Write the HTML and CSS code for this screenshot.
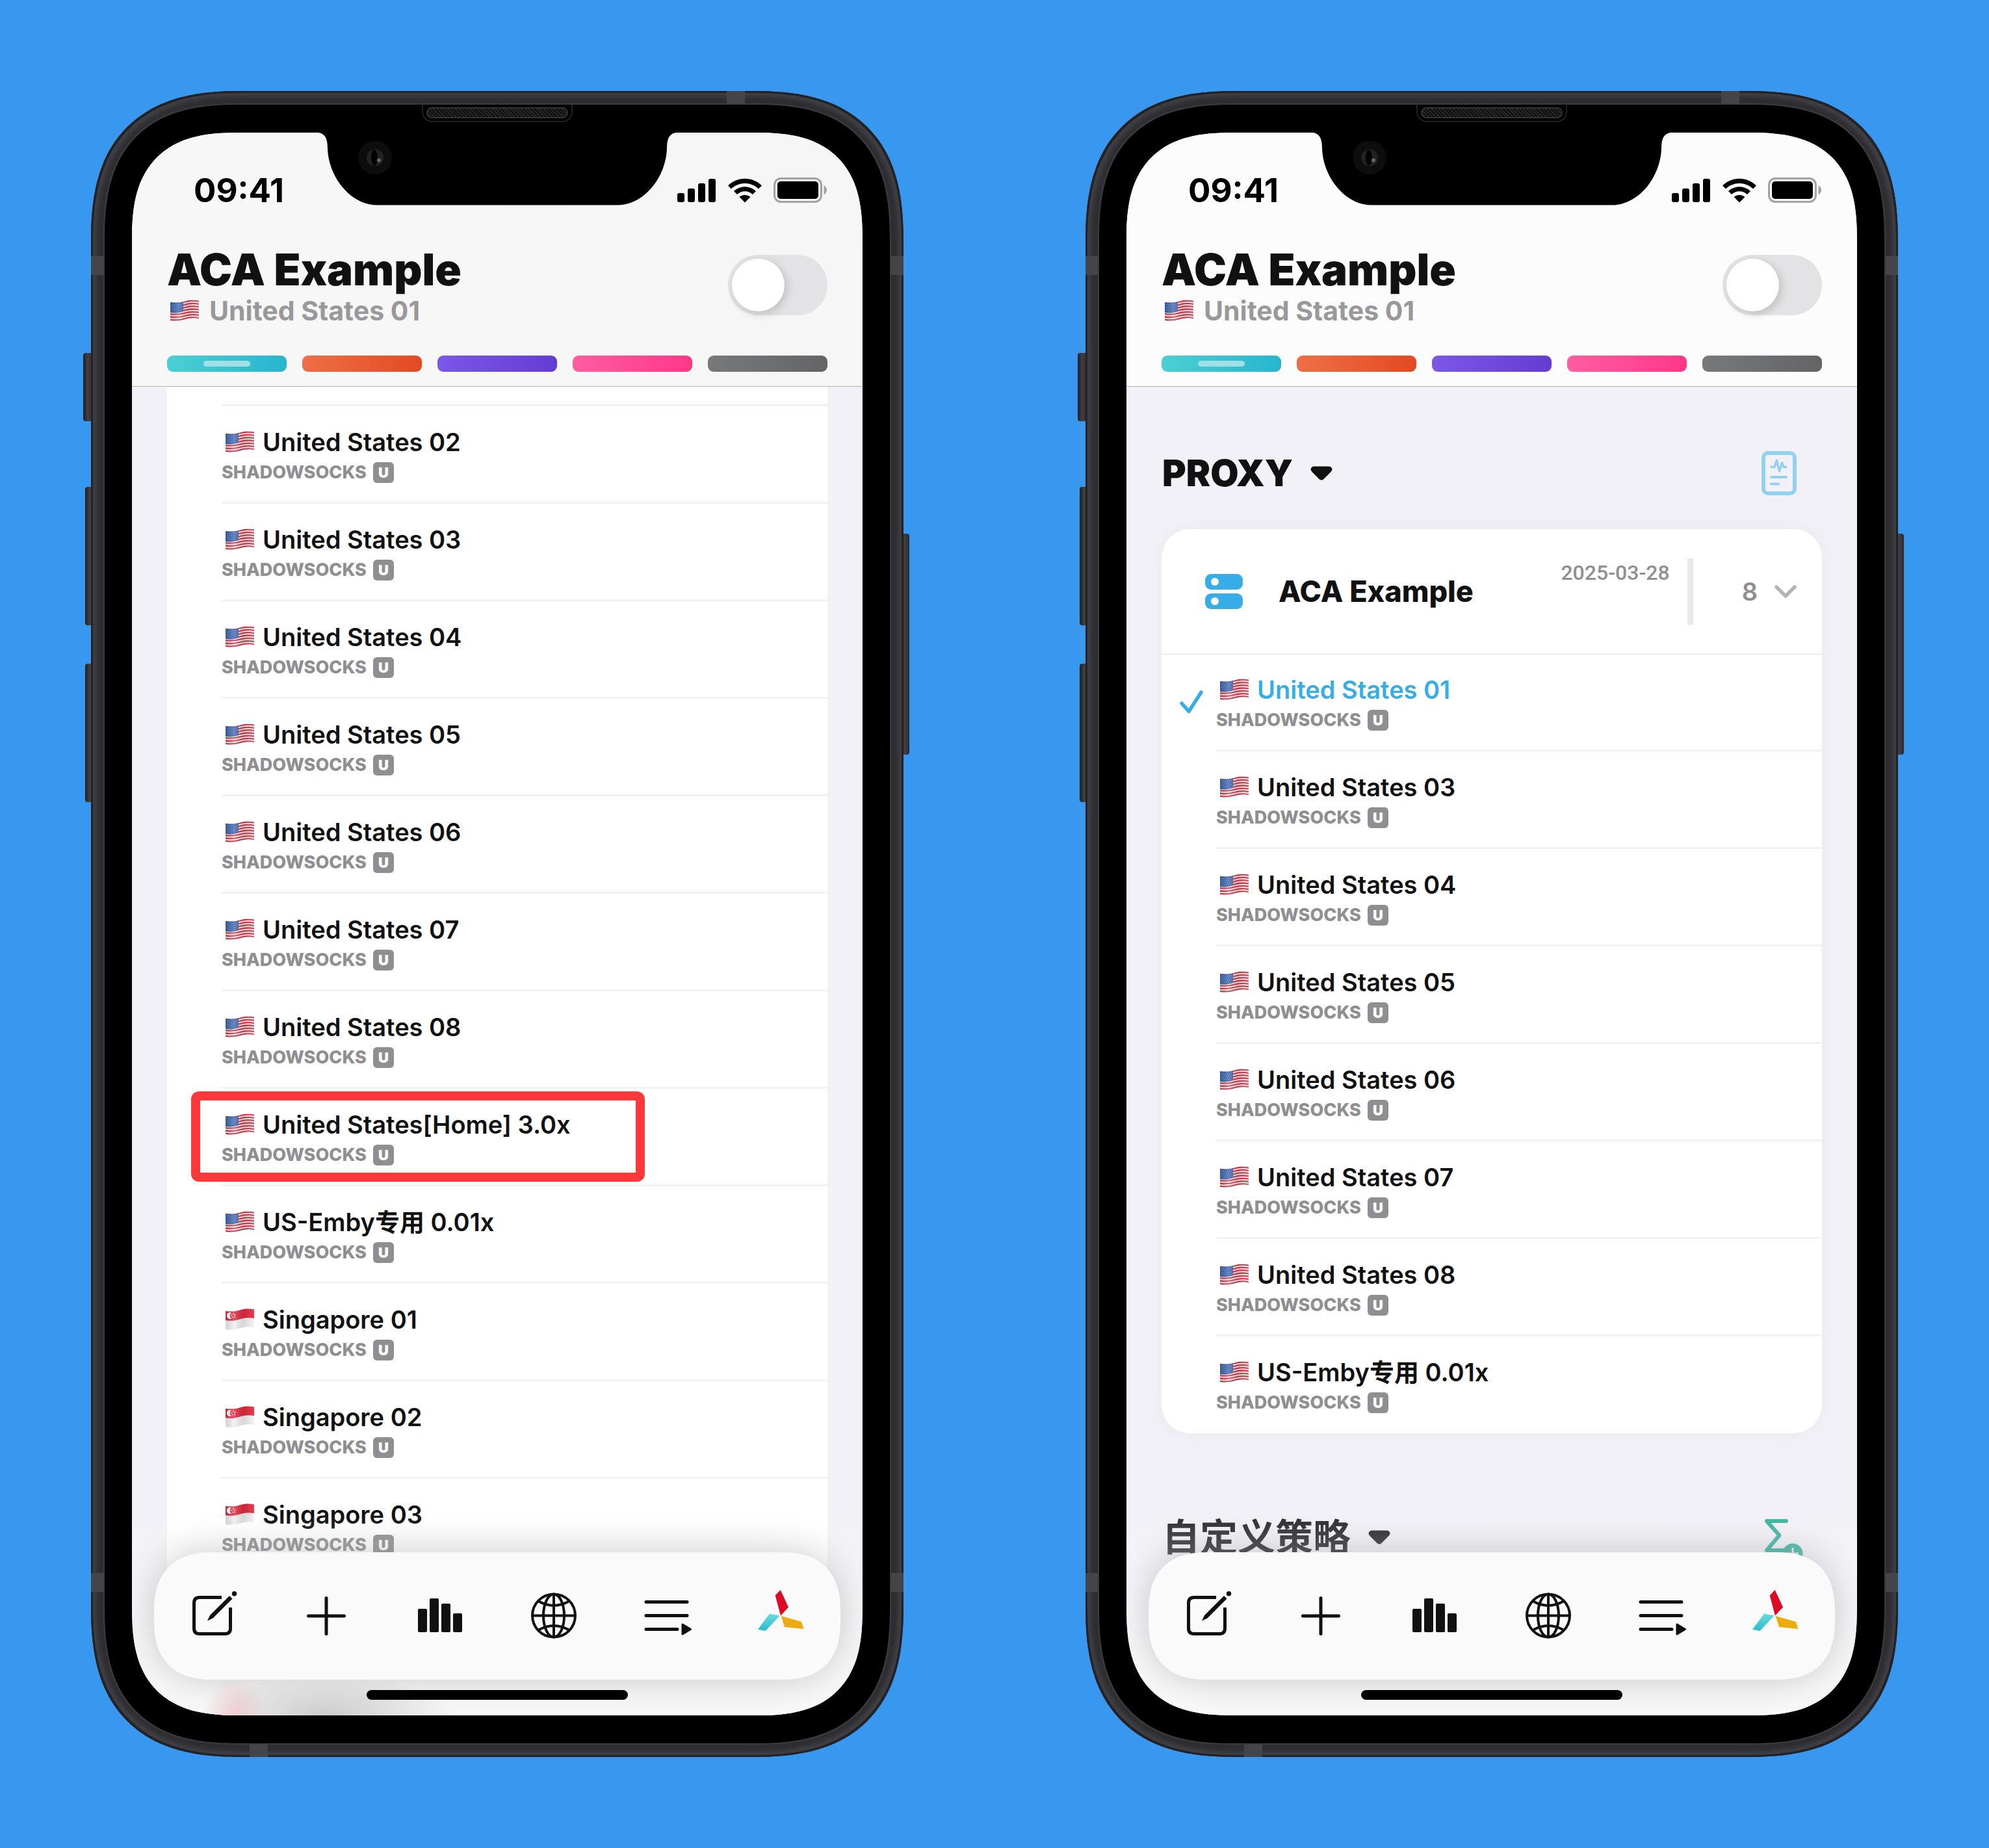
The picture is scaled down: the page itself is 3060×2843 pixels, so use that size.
FILE: index.html
```html
<!DOCTYPE html>
<html lang="zh-CN">
<head>
<meta charset="utf-8">
<meta name="viewport" content="width=device-width, initial-scale=1">
<title>ACA Example</title>
<link rel="stylesheet" href="styles.css">
</head>
<body>
<svg class="sprite" aria-hidden="true">
  <defs>
    <linearGradient id="wave" x1="0" x2="1" y1="0" y2="0">
      <stop offset="0" stop-color="#000" stop-opacity=".12"/>
      <stop offset=".3" stop-color="#fff" stop-opacity=".18"/>
      <stop offset=".65" stop-color="#000" stop-opacity=".1"/>
      <stop offset="1" stop-color="#fff" stop-opacity=".1"/>
    </linearGradient>
    <linearGradient id="cyan" x1="0" x2="0" y1="0" y2="1">
      <stop offset="0" stop-color="#6cdcdc"/><stop offset="1" stop-color="#2bbacb"/>
    </linearGradient>
    <clipPath id="cloth"><path d="M0 4C8 5 14 5 22 2.500C30 0 36 0 44 1.500V29C36 27.500 30 28 22 30.500C14 33 8 33.500 0 32Z"/></clipPath>
    <symbol id="flag-us" viewBox="0 0 44 34">
      <g clip-path="url(#cloth)">
        <rect width="44" height="34" fill="#f7f1f2"/>
        <g fill="none" stroke="#d33a4c" stroke-width="2.300">
          <path d="M0 5C8 6 14 6 22 3.500C30 1 36 1 44 2.500"/>
          <path d="M0 9.300C8 10.300 14 10.300 22 7.800C30 5.300 36 5.300 44 6.800"/>
          <path d="M0 13.600C8 14.600 14 14.600 22 12.100C30 9.600 36 9.600 44 11.100"/>
          <path d="M0 17.900C8 18.900 14 18.900 22 16.400C30 13.900 36 13.900 44 15.400"/>
          <path d="M0 22.200C8 23.200 14 23.200 22 20.700C30 18.200 36 18.200 44 19.700"/>
          <path d="M0 26.500C8 27.500 14 27.500 22 25C30 22.500 36 22.500 44 24"/>
          <path d="M0 30.900C8 31.900 14 31.900 22 29.400C30 26.900 36 26.900 44 28.400"/>
        </g>
        <path d="M0 3C8 5 13 5 20 2.500V18C13 20.500 8 21 0 20Z" fill="#3a63ad"/>
        <g fill="none" stroke="#b9c8e6" stroke-width="1" stroke-dasharray="1 2">
          <path d="M2 7.500Q10 9 19 6.500M3 10.500Q11 12 19 9.500M2 13.500Q10 15 19 12.500M3 16.500Q11 18 19 15.500"/>
        </g>
        <rect width="44" height="34" fill="url(#wave)"/>
      </g>
    </symbol>
    <symbol id="flag-sg" viewBox="0 0 44 34">
      <g clip-path="url(#cloth)">
        <rect width="44" height="34" fill="#f1f1f1"/>
        <path d="M0 0H44V15C36 13.500 30 14 22 16.500C14 19 8 19.500 0 18Z" fill="#e2293f"/>
        <path d="M9 6.500A5 5 0 1 0 9 15.500A5.500 5.500 0 0 1 9 6.500Z" fill="#fff"/>
        <g fill="#fff"><circle cx="12" cy="8" r="1"/><circle cx="9.500" cy="10.500" r="1"/><circle cx="14.500" cy="10" r="1"/><circle cx="10.500" cy="13.500" r="1"/><circle cx="13.800" cy="13.200" r="1"/></g>
        <rect width="44" height="34" fill="url(#wave)"/>
      </g>
    </symbol>
    <symbol id="signal" viewBox="0 0 60 38">
      <rect x="0" y="23" width="11" height="14" rx="3"/><rect x="16" y="16" width="11" height="21" rx="3"/>
      <rect x="32" y="8" width="11" height="29" rx="3"/><rect x="48" y="1" width="11" height="36" rx="3"/>
    </symbol>
    <symbol id="wifi" viewBox="0 0 54 38">
      <path d="M1 11.500C16-3 38-3 53 11.500L48 16.500C36 5 18 5 6 16.500Z"/>
      <path d="M10 20C20 11 34 11 44 20L39 25C32 18.500 22 18.500 15 25Z"/>
      <path d="M18.500 29C23.500 25 30.500 25 35.500 29L27 37.500Z"/>
    </symbol>
    <symbol id="battery" viewBox="0 0 83 40">
      <rect x="1.500" y="1.500" width="72" height="36" rx="10" fill="none" stroke="#a3a3a5" stroke-width="3"/>
      <rect x="6" y="6" width="63" height="27" rx="5"/>
      <path d="M77.500 12.500C83.500 15 83.500 24 77.500 26.500Z" fill="#a3a3a5"/>
    </symbol>
    <symbol id="edit" viewBox="0 0 76 76">
      <path d="M52 9.500H18Q9.500 9.500 9.500 18V57Q9.500 65.500 18 65.500H57Q65.500 65.500 65.500 57V25" fill="none" stroke="currentColor" stroke-width="5"/>
      <path d="M30 45.500L34 37L64 7L68.500 11.500L38.500 41.500Z"/>
      <circle cx="71.500" cy="3.800" r="3.700"/>
    </symbol>
    <symbol id="plus" viewBox="0 0 76 76"><path d="M10.500 38H65.500M38 10.500V65.500" stroke="currentColor" stroke-width="5" stroke-linecap="round"/></symbol>
    <symbol id="chart" viewBox="0 0 76 76">
      <rect x="4" y="27" width="14" height="36" rx="2"/><rect x="22" y="11" width="14" height="52" rx="2"/>
      <rect x="40" y="19" width="14" height="44" rx="2"/><rect x="58" y="34" width="14" height="29" rx="2"/>
    </symbol>
    <symbol id="globe" viewBox="0 0 76 76">
      <g fill="none" stroke="currentColor" stroke-width="4">
        <circle cx="38" cy="37.500" r="33"/><ellipse cx="38" cy="37.500" rx="16" ry="33"/>
        <path d="M38 4V71M5 37.500H71M14 15Q38 29 62 15M14 60Q38 46 62 60"/>
      </g>
    </symbol>
    <symbol id="lines" viewBox="0 0 76 76">
      <path d="M5 16.500H68M5 37.500H68M5 58.500H53" stroke="currentColor" stroke-width="5" stroke-linecap="round"/>
      <path d="M61 51L73.500 58.500L61 66Z" stroke="currentColor" stroke-width="3" stroke-linejoin="round"/>
    </symbol>
    <symbol id="vane" viewBox="0 0 76 76">
      <path d="M36.700 -2L28.700 6.500L37 37.500L49 24.500Z" fill="#dd0a25"/>
      <path d="M20 34.500L35.700 37.500L13.500 61L2 58.700Z" fill="url(#cyan)"/>
      <path d="M37.700 38L69 47L72.300 58L43 55Z" fill="#eeab0f"/>
    </symbol>
    <symbol id="caret" viewBox="0 0 34 22"><path d="M5 .5H29Q33 1 33.500 5Q33.500 7 31 9.500L20.500 20Q17 23 13.500 20L3 9.500Q.5 7 .5 5Q1 1 5 .5Z"/></symbol>
    <symbol id="report" viewBox="0 0 54 68">
      <g fill="none" stroke="currentColor" stroke-linecap="round" stroke-linejoin="round">
        <rect x="3" y="3" width="48" height="62" rx="7" stroke-width="6"/>
        <path d="M15 24.500H20L23.500 14L27.500 31L31.500 18L34 24.500H38" stroke-width="3.500"/>
        <path d="M15 40H38M15 50.500H26" stroke-width="4"/>
      </g>
    </symbol>
    <symbol id="sigma" viewBox="0 0 54 68">
      <path d="M38 9H8L27.500 31L8 54H38" fill="none" stroke="currentColor" stroke-width="6" stroke-linecap="round" stroke-linejoin="round"/>
      <circle cx="48" cy="59" r="15.500"/><path d="M48 50V68M39 59H57" stroke="#e6eceb" stroke-width="3"/>
    </symbol>
    <symbol id="server" viewBox="0 0 58 54">
      <rect y="0" width="58" height="24" rx="9"/><rect y="30" width="58" height="24" rx="9"/>
      <circle cx="15" cy="12" r="6" fill="#fff"/><circle cx="15" cy="42" r="6" fill="#fff"/>
    </symbol>
    <symbol id="chevron" viewBox="0 0 36 22"><path d="M4 4L18 18L32 4" fill="none" stroke="currentColor" stroke-width="5.500" stroke-linecap="round" stroke-linejoin="round"/></symbol>
    <symbol id="check" viewBox="0 0 36 36"><path d="M3 20L14 32.500L33 3" fill="none" stroke="currentColor" stroke-width="5.500" stroke-linecap="round" stroke-linejoin="round"/></symbol>
  </defs>
</svg>

<main class="stage">
  <section class="phone" aria-label="Phone 1">
    <i class="key key-mute"></i><i class="key key-up"></i><i class="key key-down"></i><i class="key key-power"></i>
    <div class="frame">
      <i class="band band-top"></i><i class="band band-bottom"></i><i class="band band-side-top"></i><i class="band band-side-bottom"></i>
      <div class="bezel">
        <i class="speaker"></i>
        <div class="screen">
          <header class="header">
            <div class="status"><span class="time">09:41</span>
              <svg class="i-signal"><use href="#signal"/></svg><svg class="i-wifi"><use href="#wifi"/></svg><svg class="i-battery"><use href="#battery"/></svg>
            </div>
            <div class="headline">
              <div><h1 class="title">ACA Example</h1>
                <p class="current"><svg class="flag" role="img" aria-label="US"><use href="#flag-us"/></svg>United States 01</p></div>
              <input class="switch" type="checkbox" role="switch" aria-label="ACA Example">
            </div>
            <div class="pages">
              <button class="page cyan active" aria-label="1"></button><button class="page orange" aria-label="2"></button><button class="page purple" aria-label="3"></button><button class="page pink" aria-label="4"></button><button class="page grey" aria-label="5"></button>
            </div>
          </header>
          <div class="content">
            <ul class="nodes scrolled">
              <li class="node"><span class="name"><svg class="flag"><use href="#flag-us"/></svg>United States 02</span><span class="proto">SHADOWSOCKS<b class="udp">U</b></span></li>
              <li class="node"><span class="name"><svg class="flag"><use href="#flag-us"/></svg>United States 03</span><span class="proto">SHADOWSOCKS<b class="udp">U</b></span></li>
              <li class="node"><span class="name"><svg class="flag"><use href="#flag-us"/></svg>United States 04</span><span class="proto">SHADOWSOCKS<b class="udp">U</b></span></li>
              <li class="node"><span class="name"><svg class="flag"><use href="#flag-us"/></svg>United States 05</span><span class="proto">SHADOWSOCKS<b class="udp">U</b></span></li>
              <li class="node"><span class="name"><svg class="flag"><use href="#flag-us"/></svg>United States 06</span><span class="proto">SHADOWSOCKS<b class="udp">U</b></span></li>
              <li class="node"><span class="name"><svg class="flag"><use href="#flag-us"/></svg>United States 07</span><span class="proto">SHADOWSOCKS<b class="udp">U</b></span></li>
              <li class="node"><span class="name"><svg class="flag"><use href="#flag-us"/></svg>United States 08</span><span class="proto">SHADOWSOCKS<b class="udp">U</b></span></li>
              <li class="node marked"><span class="name"><svg class="flag"><use href="#flag-us"/></svg>United States[Home] 3.0x</span><span class="proto">SHADOWSOCKS<b class="udp">U</b></span></li>
              <li class="node"><span class="name"><svg class="flag"><use href="#flag-us"/></svg>US-Emby专用 0.01x</span><span class="proto">SHADOWSOCKS<b class="udp">U</b></span></li>
              <li class="node"><span class="name"><svg class="flag"><use href="#flag-sg"/></svg>Singapore 01</span><span class="proto">SHADOWSOCKS<b class="udp">U</b></span></li>
              <li class="node"><span class="name"><svg class="flag"><use href="#flag-sg"/></svg>Singapore 02</span><span class="proto">SHADOWSOCKS<b class="udp">U</b></span></li>
              <li class="node"><span class="name"><svg class="flag"><use href="#flag-sg"/></svg>Singapore 03</span><span class="proto">SHADOWSOCKS<b class="udp">U</b></span></li>
            </ul>
          </div>
          <div class="haze haze-row"></div>
          <nav class="tabs">
            <button class="tab" aria-label="Edit"><svg><use href="#edit"/></svg></button>
            <button class="tab" aria-label="Add"><svg><use href="#plus"/></svg></button>
            <button class="tab" aria-label="Statistics"><svg><use href="#chart"/></svg></button>
            <button class="tab" aria-label="Network"><svg><use href="#globe"/></svg></button>
            <button class="tab" aria-label="Rules"><svg><use href="#lines"/></svg></button>
            <button class="tab" aria-label="Home"><svg><use href="#vane"/></svg></button>
          </nav>
          <i class="home-bar"></i>
          <svg class="notch" viewBox="0 0 562 112"><path d="M0 0C16 0 20 8 20 26C22 70 56 112 96 112H466C506 112 540 70 542 26C542 8 546 0 562 0Z"/><circle cx="93" cy="39" r="26" fill="#0d0d0d"/><circle cx="93" cy="39" r="13" fill="#222225"/><ellipse cx="92" cy="39" rx="5" ry="12"/><circle cx="99" cy="43" r="3" fill="#66666b"/></svg>
        </div>
      </div>
    </div>
  </section>

  <section class="phone" aria-label="Phone 2">
    <i class="key key-mute"></i><i class="key key-up"></i><i class="key key-down"></i><i class="key key-power"></i>
    <div class="frame">
      <i class="band band-top"></i><i class="band band-bottom"></i><i class="band band-side-top"></i><i class="band band-side-bottom"></i>
      <div class="bezel">
        <i class="speaker"></i>
        <div class="screen">
          <header class="header light">
            <div class="status"><span class="time">09:41</span>
              <svg class="i-signal"><use href="#signal"/></svg><svg class="i-wifi"><use href="#wifi"/></svg><svg class="i-battery"><use href="#battery"/></svg>
            </div>
            <div class="headline">
              <div><h1 class="title">ACA Example</h1>
                <p class="current"><svg class="flag" role="img" aria-label="US"><use href="#flag-us"/></svg>United States 01</p></div>
              <input class="switch" type="checkbox" role="switch" aria-label="ACA Example">
            </div>
            <div class="pages">
              <button class="page cyan active" aria-label="1"></button><button class="page orange" aria-label="2"></button><button class="page purple" aria-label="3"></button><button class="page pink" aria-label="4"></button><button class="page grey" aria-label="5"></button>
            </div>
          </header>
          <div class="content">
            <div class="section-head">
              <h2><button class="fold">PROXY<svg class="i-caret"><use href="#caret"/></svg></button></h2>
              <button class="tool report" aria-label="Test"><svg><use href="#report"/></svg></button>
            </div>
            <div class="card">
              <div class="card-head">
                <svg class="i-server"><use href="#server"/></svg>
                <h3 class="card-title">ACA Example</h3>
                <div class="expiry"><time datetime="2025-03-28">2025-03-28</time></div>
                <button class="count">8<svg class="i-chevron"><use href="#chevron"/></svg></button>
              </div>
              <ul class="nodes">
                <li class="node selected"><svg class="i-check"><use href="#check"/></svg><span class="name"><svg class="flag"><use href="#flag-us"/></svg>United States 01</span><span class="proto">SHADOWSOCKS<b class="udp">U</b></span></li>
                <li class="node"><span class="name"><svg class="flag"><use href="#flag-us"/></svg>United States 03</span><span class="proto">SHADOWSOCKS<b class="udp">U</b></span></li>
                <li class="node"><span class="name"><svg class="flag"><use href="#flag-us"/></svg>United States 04</span><span class="proto">SHADOWSOCKS<b class="udp">U</b></span></li>
                <li class="node"><span class="name"><svg class="flag"><use href="#flag-us"/></svg>United States 05</span><span class="proto">SHADOWSOCKS<b class="udp">U</b></span></li>
                <li class="node"><span class="name"><svg class="flag"><use href="#flag-us"/></svg>United States 06</span><span class="proto">SHADOWSOCKS<b class="udp">U</b></span></li>
                <li class="node"><span class="name"><svg class="flag"><use href="#flag-us"/></svg>United States 07</span><span class="proto">SHADOWSOCKS<b class="udp">U</b></span></li>
                <li class="node"><span class="name"><svg class="flag"><use href="#flag-us"/></svg>United States 08</span><span class="proto">SHADOWSOCKS<b class="udp">U</b></span></li>
                <li class="node"><span class="name"><svg class="flag"><use href="#flag-us"/></svg>US-Emby专用 0.01x</span><span class="proto">SHADOWSOCKS<b class="udp">U</b></span></li>
              </ul>
            </div>
            <div class="section-head next">
              <h2><button class="fold">自定义策略<svg class="i-caret"><use href="#caret"/></svg></button></h2>
              <button class="tool sigma" aria-label="Add policy"><svg><use href="#sigma"/></svg></button>
            </div>
          </div>
          <div class="haze"></div>
          <nav class="tabs">
            <button class="tab" aria-label="Edit"><svg><use href="#edit"/></svg></button>
            <button class="tab" aria-label="Add"><svg><use href="#plus"/></svg></button>
            <button class="tab" aria-label="Statistics"><svg><use href="#chart"/></svg></button>
            <button class="tab" aria-label="Network"><svg><use href="#globe"/></svg></button>
            <button class="tab" aria-label="Rules"><svg><use href="#lines"/></svg></button>
            <button class="tab" aria-label="Home"><svg><use href="#vane"/></svg></button>
          </nav>
          <i class="home-bar"></i>
          <svg class="notch" viewBox="0 0 562 112"><path d="M0 0C16 0 20 8 20 26C22 70 56 112 96 112H466C506 112 540 70 542 26C542 8 546 0 562 0Z"/><circle cx="93" cy="39" r="26" fill="#0d0d0d"/><circle cx="93" cy="39" r="13" fill="#222225"/><ellipse cx="92" cy="39" rx="5" ry="12"/><circle cx="99" cy="43" r="3" fill="#66666b"/></svg>
        </div>
      </div>
    </div>
  </section>
</main>
</body>
</html>
```
FILE: styles.css
```css
*, *::before, *::after { box-sizing: border-box; }

body {
  margin: 0;
  background: #3898ef;
  color: #111;
  font-family: Inter, "Noto Sans CJK SC", sans-serif;
}

h1, h2, h3, p, ul { margin: 0; padding: 0; }
ul { list-style: none; }
button { margin: 0; padding: 0; border: 0; background: none; color: inherit; font: inherit; }
svg { display: block; flex: none; fill: currentColor; overflow: visible; }
symbol { overflow: visible; }
.sprite { position: absolute; width: 0; height: 0; }

.stage { display: grid; grid-template-columns: 1fr 1fr; gap: 280px; padding: 140px; }

/* Device body */
.phone { position: relative; }
.frame {
  position: relative;
  padding: 21px;
  border-radius: 192px;
  background: #2e2d32;
  box-shadow: inset 0 0 0 3px #232226, inset 0 0 6px 8px #414045;
}
.bezel {
  position: relative;
  padding: 43px 42px;
  border-radius: 171px;
  background: #000;
  box-shadow: 0 0 0 2px #3b3a3e;
}
.screen {
  position: relative;
  display: flex;
  flex-direction: column;
  aspect-ratio: 1124 / 2435;
  overflow: hidden;
  border-radius: 132px;
  background: #f2f1f7;
}
@supports (corner-shape: round) {
  .frame { border-radius: 235px; corner-shape: superellipse(1.36); }
  .bezel { border-radius: 210px; corner-shape: superellipse(1.38); }
  .screen { border-radius: 168px; corner-shape: superellipse(1.42); }
  .tabs { corner-shape: superellipse(1.3); }
}

.key { position: absolute; width: 14px; border-radius: 4px; background: linear-gradient(90deg, #1f1e21, #434044 50%, #2a292c); }
.key-mute { left: -12px; top: 403px; height: 105px; }
.key-up { left: -9px; top: 609px; height: 213px; }
.key-down { left: -9px; top: 881px; height: 213px; }
.key-power { right: -9px; top: 681px; height: 340px; }

.band { position: absolute; background: #454448; }
.band-top { top: 0; right: 244px; width: 28px; height: 19px; }
.band-bottom { bottom: 0; left: 244px; width: 28px; height: 19px; }
.band-side-top, .band-side-bottom { left: 0; right: 0; height: 29px; }
.band-side-top { top: 254px; }
.band-side-bottom { bottom: 254px; }

.speaker {
  position: absolute;
  top: 0;
  left: 50%;
  width: 232px;
  height: 27px;
  margin-left: -116px;
  border: 2px solid #202022;
  border-top: 0;
  border-radius: 0 0 16px 16px;
}
.speaker::after {
  content: "";
  position: absolute;
  inset: 4px 5px;
  border: 2px solid #333336;
  border-radius: 9px;
  background: repeating-linear-gradient(45deg, #101011 0 2px, #262628 2px 4px);
}
.notch { position: absolute; top: -1px; left: 50%; width: 562px; height: 113px; margin-left: -281px; color: #000; }

/* Header */
.header { padding: 59px 54px 22px; border-bottom: 1px solid #b2b2b5; background: linear-gradient(90deg, #f8f7f8, #f6f6f6); }
.header.light { background: #fcfcfd; }
.status { display: flex; align-items: center; height: 60px; padding-left: 41px; color: #000; }
.time { flex: 1; font-size: 51px; font-weight: 700; line-height: 60px; }
.i-signal { width: 60px; height: 38px; margin-right: 17px; }
.i-wifi { width: 54px; height: 38px; margin-right: 17px; }
.i-battery { width: 83px; height: 40px; }
.headline { display: flex; align-items: center; justify-content: space-between; margin-top: 52px; }
.title { font-size: 67px; font-weight: 900; line-height: 80px; }
.current { display: flex; align-items: center; padding-left: 5px; color: #99999b; font-size: 41px; font-weight: 700; line-height: 46px; }
.flag { width: 44px; height: 34px; margin-right: 13px; }
.current .flag { margin-right: 16px; }

.switch {
  appearance: none;
  width: 153px;
  height: 93px;
  margin: 0;
  padding: 6px;
  border-radius: 47px;
  background: #e3e3e5;
}
.switch::before {
  content: "";
  display: block;
  width: 81px;
  height: 81px;
  border-radius: 50%;
  background: #fff;
  box-shadow: 4px 4px 14px rgb(0 0 0 / 16%);
}

.pages { display: grid; grid-template-columns: repeat(5, 1fr); gap: 24px; margin-top: 46px; }
.page { display: flex; align-items: center; justify-content: center; height: 25px; border-radius: 9px; }
.page.active::before { content: ""; width: 72px; height: 9px; border-radius: 5px; background: #9fe0e8; }
.cyan { background: linear-gradient(100deg, #4bd0d2, #27b5cf); }
.orange { background: linear-gradient(100deg, #ee6f47, #e24a22); }
.purple { background: linear-gradient(100deg, #7b58e6, #633dd2); }
.pink { background: linear-gradient(100deg, #ff5ea0, #ff3787); }
.grey { background: linear-gradient(100deg, #77797b, #646467); }

/* Lists */
.content { display: flex; flex: 1; flex-direction: column; min-height: 0; padding: 0 54px; }
.scrolled { flex: 1; padding-top: 27px; background: #fff; }
.node {
  position: relative;
  display: flex;
  flex-direction: column;
  gap: 8px;
  height: 150px;
  margin-left: 84px;
  padding-top: 32px;
  border-top: 3px solid #f3f3f4;
}
.name { display: flex; align-items: center; padding-left: 6px; font-size: 38px; font-weight: 600; line-height: 46px; }
.proto { display: flex; align-items: center; gap: 10px; color: #8f8f91; font-size: 27px; font-weight: 800; line-height: 32px; }
.udp { width: 32px; height: 32px; border-radius: 6px; background: #8f8f91; color: #fff; font-size: 22px; font-weight: 900; text-align: center; }
.marked { z-index: 1; }
.marked::after {
  content: "";
  position: absolute;
  top: 4px;
  left: -47px;
  width: 698px;
  height: 139px;
  border: 14px solid #ff393b;
  border-radius: 12px;
}
.selected { height: 145px; padding-top: 30px; border-top: 0; }
.selected .name { color: #36ade6; }
.i-check { position: absolute; top: 54px; left: -56px; width: 36px; height: 36px; color: #36ade6; }

.section-head { display: flex; align-items: center; justify-content: space-between; padding: 99px 39px 52px 1px; }
.section-head.next { padding-top: 126px; color: #2c2c2f; }
.section-head h2 { font-size: 56px; font-weight: 900; line-height: 68px; }
.section-head.next h2 { font-size: 58px; font-weight: 700; }
.fold { display: flex; align-items: center; gap: 27px; height: 68px; }
.i-caret { width: 34px; height: 22px; }
.tool svg { width: 54px; height: 68px; }
.report { color: #92d2ef; }
.sigma { color: #3db5a0; }

.card { border-radius: 44px; background: #fff; box-shadow: 0 0 40px rgb(0 0 0 / 4%); }
.card .node:last-child { height: 152px; }
.card-head { display: flex; align-items: center; height: 194px; padding: 0 38px 0 67px; border-bottom: 3px solid #f2f2f3; }
.i-server { width: 58px; height: 54px; margin-right: 55px; color: #36ade6; }
.card-title { flex: 1; font-size: 45px; font-weight: 800; line-height: 54px; }
.expiry { height: 102px; padding-right: 27px; border-right: 9px solid #e9e9ea; color: #909092; font-family: Roboto, sans-serif; font-size: 32px; font-weight: 500; line-height: 44px; }
.count { display: flex; align-items: center; gap: 25px; padding-left: 75px; color: #8f8f91; font-size: 38px; font-weight: 600; line-height: 46px; }
.i-chevron { width: 36px; height: 22px; color: #b4b4b6; }

/* Bottom bar */
.haze {
  position: absolute;
  inset: auto 0 0;
  height: 310px;
  background: linear-gradient(rgb(250 250 250 / 0%), rgb(250 250 250 / 22%) 58px, rgb(250 250 250 / 60%) 160px, #f9f9f9 260px);
}
.haze-row {
  background:
    radial-gradient(50px 60px at 160px 100%, rgb(255 120 130 / 26%), transparent),
    radial-gradient(200px 60px at 300px 100%, rgb(110 110 115 / 32%), transparent),
    linear-gradient(rgb(250 250 250 / 0%), rgb(250 250 250 / 22%) 58px, rgb(250 250 250 / 60%) 160px, #f9f9f9 260px);
}
.tabs {
  position: absolute;
  right: 34px;
  bottom: 55px;
  left: 34px;
  display: grid;
  grid-template-columns: repeat(6, 1fr);
  height: 196px;
  padding: 0 4px 0 2px;
  border-radius: 92px;
  background: #fafafa;
  box-shadow: 0 0 60px rgb(0 0 0 / 20%);
}
.tab { display: grid; place-items: center; }
.tab svg { width: 76px; height: 76px; }
.home-bar { position: absolute; bottom: 24px; left: 50%; width: 402px; height: 15px; margin-left: -201px; border-radius: 8px; background: #000; }
```
